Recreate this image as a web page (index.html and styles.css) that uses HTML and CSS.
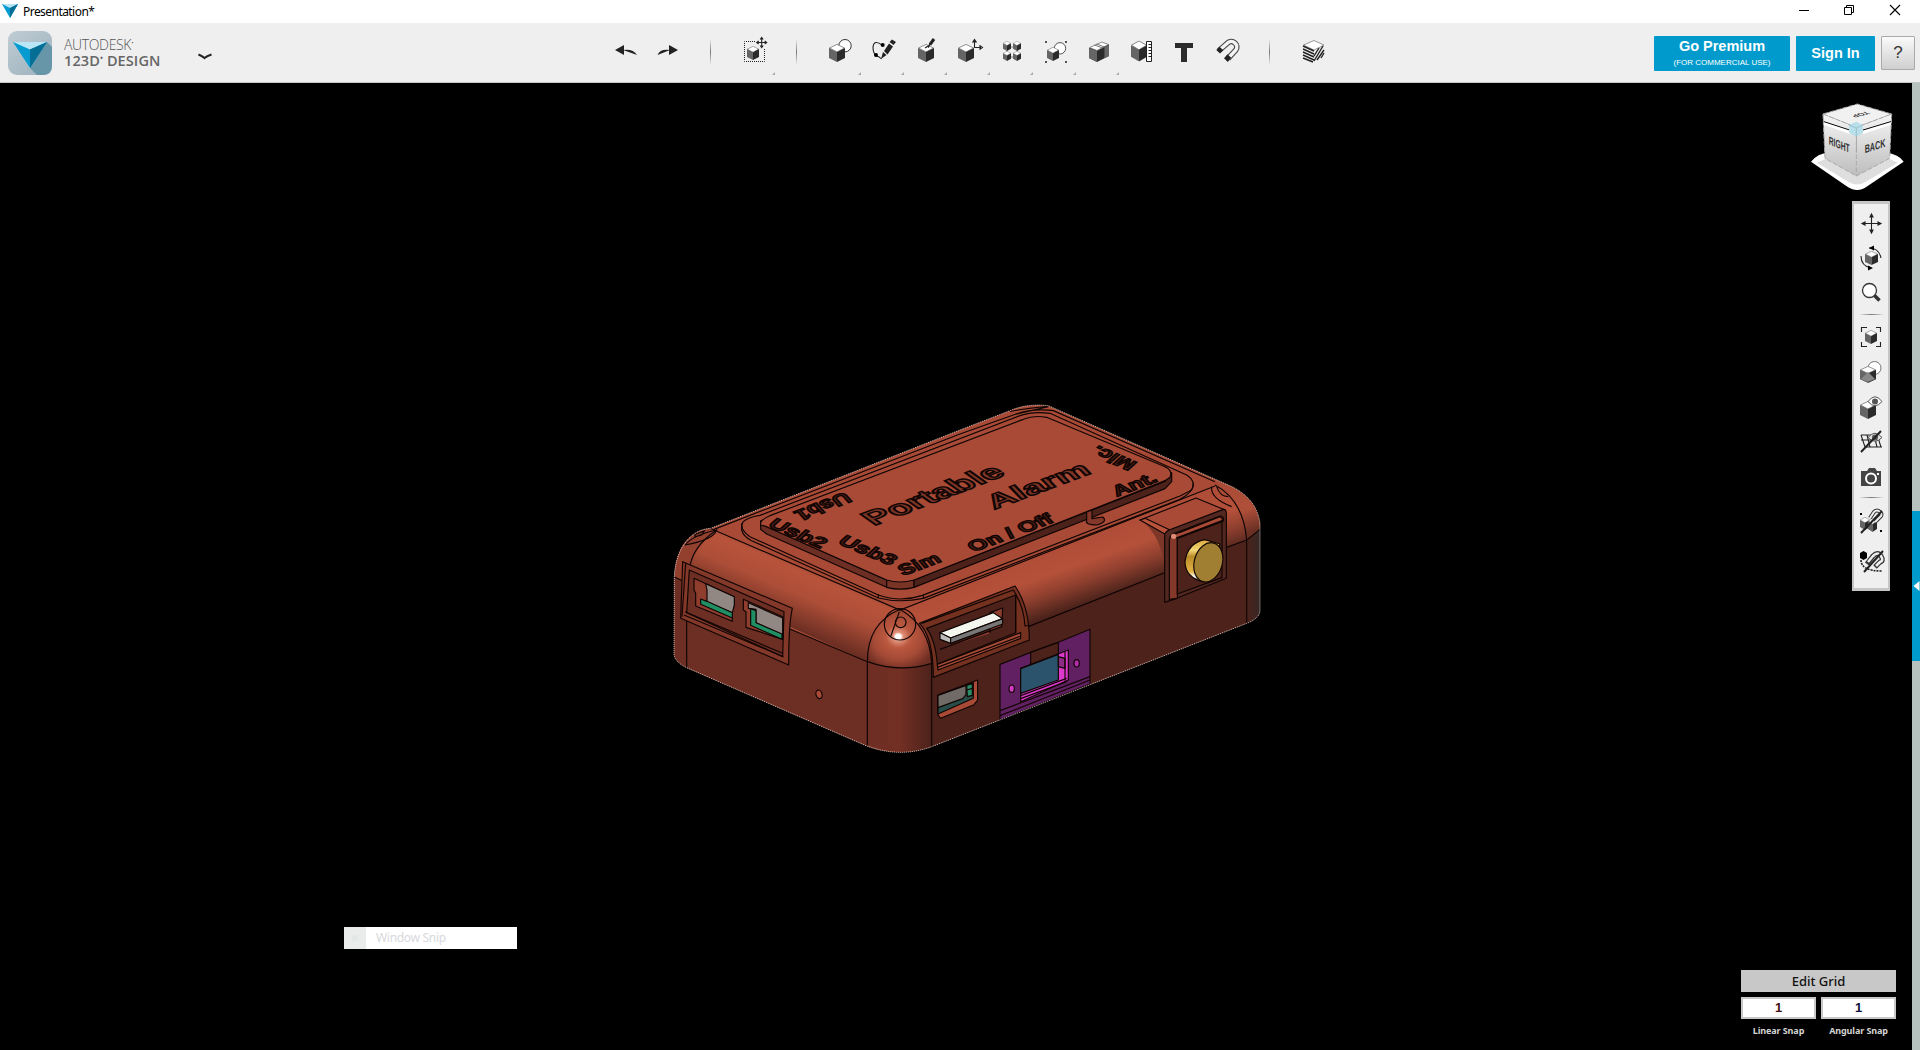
FILE: index.html
```html
<!DOCTYPE html>
<html lang="en">
<head>
<meta charset="utf-8">
<title>Presentation*</title>
<link rel="stylesheet" href="styles.css">
</head>
<body>
<svg class="defs" aria-hidden="true">
  <symbol id="cube" viewBox="0 0 16 18" preserveAspectRatio="none">
    <path d="M8 .4 15.5 4 8 8 .5 4Z" fill="#fff" stroke="#777" stroke-width=".8"/>
    <path d="M0 4 8 8V18L0 14Z" fill="#656565"/>
    <path d="M16 4 8 8V18L16 14Z" fill="#2b2b2b"/>
  </symbol>
  <symbol id="mark" viewBox="0 0 4 4"><path d="M4 0V4H0Z" fill="#aaa"/></symbol>
  <symbol id="gem" viewBox="0 0 34 28" preserveAspectRatio="none">
    <path d="M0 0H34L17 28Z" fill="#069bd0"/><path d="M0 0H34L17 8Z" fill="#b9e6f5"/><path d="M34 0 17 8V28Z" fill="#066d94"/>
  </symbol>
</svg>

<header class="titlebar">
  <svg class="titlebar-logo" width="16" height="14"><use href="#gem" width="16" height="14"/></svg>
  <span class="titlebar-text">Presentation*</span>
  <div class="window-buttons">
    <svg width="46" height="23"><path d="M15 10.500H25" stroke="#000"/></svg>
    <svg width="46" height="23"><path d="M14.500 7.500h7v7h-7zM16.500 7v-1.500h7v7h-2" fill="none" stroke="#000"/></svg>
    <svg width="46" height="23"><path d="M14 5l10 10M24 5L14 15" stroke="#000" stroke-width="1.100"/></svg>
  </div>
</header>

<div class="toolbar">
  <div class="brand">
    <svg width="44" height="44" viewBox="0 0 44 44">
      <defs><linearGradient id="bg" x2=".8" y2="1"><stop offset="0" stop-color="#c0ccd4"/><stop offset="1" stop-color="#9fb4bf"/></linearGradient></defs>
      <rect width="44" height="44" rx="9" fill="url(#bg)"/>
      <path d="M39 11 44 16V35Q44 44 35 44H29L22 37Z" fill="#6796a9"/>
      <use href="#gem" x="5" y="11" width="34" height="26"/>
    </svg>
    <div class="brand-name"><span class="brand-top">AUTODESK<sup>•</sup></span><span class="brand-bottom">123D<sup>•</sup> DESIGN</span></div>
    <svg class="chevron" width="16" height="8"><path d="M1.500 1.500Q5 3 7.500 5Q10 3 14.500 1.500" fill="none" stroke="#222" stroke-width="2.200"/></svg>
  </div>
  <nav class="tools">
    <svg class="tool"><path d="M12 27l9-5v10zM20 27Q30 25.500 34 32" class="arrow"/></svg>
    <svg class="tool"><path d="M32 27l-9-5v10zM24 27Q14 25.500 11.500 32" class="arrow"/></svg>
    <div class="divider"></div>
    <svg class="tool"><path d="M23 18.500H12.500V38.500H32.500V26" fill="none" stroke="#222" stroke-dasharray="1 1"/><use href="#cube" x="15" y="23" width="12" height="14"/><path d="M29.700 15v9M25.200 19.500h9M28.200 16.500l1.500-2 1.500 2M28.200 22.500l1.500 2 1.500-2M26.700 18l-2 1.500 2 1.500M32.700 18l2 1.500-2 1.500" class="line"/><use href="#mark" x="40" y="49" width="3" height="3"/></svg>
    <div class="divider"></div>
    <svg class="tool"><circle cx="27" cy="22.700" r="6.200" fill="#fff" stroke="#333"/><use href="#cube" x="11" y="21" width="16" height="18"/><use href="#mark" x="40" y="49" width="3" height="3"/></svg>
    <svg class="tool"><path d="M21 22Q13 16 12 24Q12 30 15 33Q18 33 20.500 36" class="line"/><circle cx="21.700" cy="22" r="2" /><circle cx="15" cy="32" r="2"/><path d="M20 36l2-7 3.500 3zM23 28l3.500 3.500 5.500-8-4-3zM28.500 19l4 3 2.500-3-4-2.500z" fill="#222"/><use href="#mark" x="40" y="49" width="3" height="3"/></svg>
    <svg class="tool"><use href="#cube" x="14" y="21" width="16" height="18"/><path d="M24 24.500l3-5" stroke="#222" stroke-width="1.500"/><path d="M26 21.500l4-5.500" stroke="#222" stroke-width="3"/><path d="M21 25l3-2" class="line"/><use href="#mark" x="40" y="49" width="3" height="3"/></svg>
    <svg class="tool"><use href="#cube" x="11" y="21" width="16" height="18"/><path d="M27.500 25V17M27 24.500h7M25.800 19l1.700-2.500 1.700 2.500zM33 22.800l2.500 1.700-2.500 1.700z" class="line"/><use href="#mark" x="40" y="49" width="3" height="3"/></svg>
    <svg class="tool"><path d="M17 25v6M27 25v6M20 24h6M20 34h6" stroke="#888"/><use href="#cube" x="13" y="18" width="8" height="10"/><use href="#cube" x="23" y="18" width="8" height="10"/><use href="#cube" x="13" y="28" width="8" height="10"/><use href="#cube" x="23" y="28" width="8" height="10"/><use href="#mark" x="40" y="49" width="3" height="3"/></svg>
    <svg class="tool"><circle cx="27" cy="25.300" r="5.700" fill="#fff" stroke="#555"/><use href="#cube" x="14" y="24" width="12" height="14"/><path d="M12 18h2v2h-2zM32 18h2v2h-2zM12 38h2v2h-2zM32 38h2v2h-2z" fill="#555"/><use href="#mark" x="40" y="49" width="3" height="3"/></svg>
    <svg class="tool"><path d="M13 25L26 19l7 2.500V33l-12 6-8-4z" fill="#2b2b2b"/><path d="M13 25l8 3v11l-8-4z" fill="#666"/><path d="M13.500 24.500L26 19l6.500 2.500L21 27.500z" fill="#fff" stroke="#777" stroke-width=".7"/><path d="M18.500 22l8 3M20.500 21l8 3v11" fill="none" stroke="#555" stroke-width=".8"/><path d="M29 24l4-2v11l-4 2z" fill="#666"/><use href="#mark" x="40" y="49" width="3" height="3"/></svg>
    <svg class="tool"><use href="#cube" x="12" y="17.500" width="16" height="21"/><path d="M27.500 18.500h5v20h-5zM29.500 21.500h3M29.500 24.500h3M29.500 27.500h3M29.500 30.500h3M29.500 33.500h3" fill="#fff" stroke="#222"/></svg>
    <svg class="tool"><path d="M13 20h18v5h-6v14h-6V25h-6z" fill="#2b2b2b"/></svg>
    <svg class="tool"><path d="M14 27.500L22 20.500C27 15 35 22 30.500 27.500L23 35.500" fill="none" stroke="#444" stroke-width="5.600"/><path d="M14 27.500L22 20.500C27 15 35 22 30.500 27.500L23 35.500" fill="none" stroke="#f4f4f4" stroke-width="3.400"/><path d="M11.300 27l3.200-3.300 3.800 3.600-3.300 3.300zM19 35.300l3.500-4 3.700 3.400-3.400 4.200z" fill="#222"/></svg>
    <div class="divider"></div>
    <svg class="tool"><path d="M12.500 22.500l10.500 5 10-5V33l-10 6-10.500-5z" fill="#eee"/><path d="M12.500 22L23 17.500 33 22l-10 5z" fill="#fff" stroke="#555" stroke-width=".6"/><path d="M12 23l11 5M12 26l11 5M12 29l11 5M12 32l11 5M12 35l10 4M23 33l5-8M23 38l9-15M26 37l7-10M30 35l3-5" stroke="#222" stroke-width="1.400"/></svg>
  </nav>
  <div class="account">
    <button class="btn premium"><b>Go Premium</b><small>(FOR COMMERCIAL USE)</small></button>
    <button class="btn sign"><b>Sign In</b></button>
    <button class="btn help">?</button>
  </div>
</div>

<main class="workspace">
  <svg class="model" viewBox="0 0 1860 1110">
    <defs>
      <linearGradient id="gl" gradientUnits="userSpaceOnUse" x1="460" y1="530" x2="385" y2="705"><stop offset="0" stop-color="#a24733"/><stop offset=".15" stop-color="#b8533b"/><stop offset=".5" stop-color="#ad4e38"/><stop offset="1" stop-color="#6d2f23"/></linearGradient>
      <linearGradient id="gr" gradientUnits="userSpaceOnUse" x1="1230" y1="465" x2="1290" y2="635"><stop offset="0" stop-color="#b04d38"/><stop offset=".35" stop-color="#b5513a"/><stop offset=".65" stop-color="#8e3f2e"/><stop offset="1" stop-color="#4c231b"/></linearGradient>
      <linearGradient id="gc"><stop offset="0" stop-color="#6d2e23"/><stop offset=".5" stop-color="#732f24"/><stop offset="1" stop-color="#4c221b"/></linearGradient>
      <linearGradient id="ge"><stop offset="0" stop-color="#4c221b"/><stop offset="1" stop-color="#352724"/></linearGradient>
      <linearGradient id="gt" x2=".3" y2="1"><stop offset="0" stop-color="#a84a36"/><stop offset=".6" stop-color="#b0503a"/><stop offset="1" stop-color="#6a3024"/></linearGradient>
      <radialGradient id="gs" cx=".48" cy=".46" r=".6"><stop offset="0" stop-color="#fff"/><stop offset=".07" stop-color="#fff"/><stop offset=".13" stop-color="#e0917a"/><stop offset=".32" stop-color="#bb5840"/><stop offset=".65" stop-color="#a54a36"/><stop offset="1" stop-color="#6d2e23"/></radialGradient>
      <linearGradient id="gold" x2="0" y2="1"><stop offset="0" stop-color="#d9a93c"/><stop offset=".25" stop-color="#f4d775"/><stop offset=".4" stop-color="#b98a28"/><stop offset=".75" stop-color="#e3b345"/><stop offset=".88" stop-color="#fff"/><stop offset="1" stop-color="#d5a73f"/></linearGradient>
    </defs>
    <!-- enclosure body -->
    <path d="M43 560C46 480 90 418 152 415L900 120 1050 62Q1100 40 1165 47L1700 283Q1790 320 1800 400V660Q1800 685 1760 700L815 1070Q720 1105 620 1068L80 833Q42 815 42 790Z" fill="#a84a36"/>
    <path d="M43 560L80 578 388 716 622 815V1068L80 833Q42 815 42 790Z" fill="#6d2e23"/>
    <path d="M815 818L1100 706 1520 545 1760 448V700L815 1070Z" fill="#4c221b"/>
    <path d="M1760 448L1800 416V660Q1800 685 1760 700Z" fill="url(#ge)"/>
    <path d="M622 815Q720 850 815 820V1070Q720 1105 622 1066Z" fill="url(#gc)"/>
    <path d="M170 420L720 660Q622 700 622 815L80 570Q90 480 170 420Z" fill="url(#gl)"/>
    <path d="M720 655L1665 285Q1750 330 1760 450L815 820Q810 710 720 655Z" fill="url(#gr)"/>
    <path d="M152 415Q48 430 43 560L80 578Q90 480 170 420Z" fill="#93402f"/>
    <path d="M1665 285Q1750 330 1760 450L1800 418Q1795 330 1700 283Z" fill="url(#gt)"/>
    <path d="M720 660Q622 700 622 815Q720 850 815 820Q810 710 720 660Z" fill="url(#gs)"/>
    <g class="edge">
      <path d="M150 415L720 660 1665 288M162 418L900 132 1060 75Q1115 54 1180 62L1665 275M42 560L80 578M388 716L622 815Q720 850 815 820M1105 710L1514 548M1700 472L1760 450 1800 418M720 658Q622 700 622 815V1067M720 658Q810 710 815 820V1070M80 680V833M88 540Q95 470 170 420M1665 285Q1750 330 1760 450V700M1050 64Q1100 55 1165 49M1062 74L1165 50"/>
      <path d="M75 465Q100 435 170 420Q160 450 75 465M105 433l28-10-8 12-20 5zM1655 290Q1650 325 1715 350M1670 290q10 30 35 30"/>
      <circle cx="720" cy="703" r="47"/><circle cx="722" cy="697" r="16"/><path d="M718 665L692 740"/>
    </g>
    <!-- raised lid -->
    <path class="face" d="M270 440Q235 415 250 395Q262 382 300 376L1080 77Q1120 63 1170 70L1580 255Q1610 275 1595 300L1560 318 785 617Q720 638 655 615Z" fill="#a84a36"/>
    <path class="edge" d="M245 400V420Q250 440 275 452L655 624Q720 640 790 625L1560 328Q1600 308 1600 280M655 612v12M790 616v10"/>
    <path class="face" d="M302 392V418L320 432 680 592V570L320 410Z" fill="#6d2e23"/>
    <path class="face" d="M680 570V592Q720 603 762 592V570Z" fill="#7a3426"/>
    <path class="face" d="M762 570V592L1515 296 1535 275V248L1515 274Z" fill="#4c221b"/>
    <path class="face" d="M302 405Q298 390 330 377L1090 88Q1120 75 1160 82L1510 228Q1540 240 1530 262L1515 272 762 570Q720 582 680 570L320 410Z" fill="#a84a36"/>
    <path class="face" d="M1280 366v25q-6 14 30 14 35-10 18-24l-32 5v-26z" fill="#843829"/>
    <g class="engraved">
      <text class="large" transform="matrix(1 -.385 .68 .48 641 408)">Portable</text>
      <text class="large" transform="matrix(1.04 -.39 .5 .52 1003 359)">Alarm</text>
      <text transform="matrix(.67 -.25 .36 .38 940 487)">On / Off</text>
      <text transform="matrix(.64 -.24 .33 .4 730 558)">Sim</text>
      <text transform="matrix(.65 -.24 .3 .4 1370 320)">Ant.</text>
      <text transform="matrix(.66 .28 -.4 .36 320 408)">Usb2</text>
      <text transform="matrix(.66 .28 -.4 .36 530 459)">Usb3</text>
      <text transform="matrix(-.64 .25 -.36 -.4 554 305)">Usb1</text>
      <text transform="matrix(-.62 -.27 .4 -.36 1434 218)">Mic.</text>
    </g>
    <!-- USB port recess -->
    <g class="face">
      <path d="M68 515L397 655Q386 700 386 825L62 685Z" fill="#843829"/>
      <path d="M88 540L372 665 368 800 80 668Z" fill="#6d2e23"/>
      <path d="M75 665L368 790M72 675L370 800M77 520L66 680" fill="none"/>
      <path d="M102 565L223 620V645L217 660V694L107 648V610L102 600Z" fill="#8f3e2e"/><path d="M137 581L223 620V645L217 668 141 636 141 600Z" fill="#918883"/><path d="M122 627L141 634 217 668V684L122 643Z" fill="#209064"/>
      <path d="M250 628L368 680V748L258 712V665L250 660Z" fill="#8f3e2e"/><path d="M265 638L368 684V735L288 698V658L265 655Z" fill="#918883"/><path d="M272 656L288 662V698L366 732V748L272 706Z" fill="#209064"/>
    </g>
    <ellipse cx="477" cy="913" rx="9" ry="13" transform="rotate(-15 477 913)" fill="#a84a36" class="edge-line"/>
    <!-- SIM slot recess -->
    <g class="face">
      <path d="M778 700L1065 588Q1108 650 1108 750L820 862Q820 740 778 700Z" fill="#74311f"/>
      <path d="M800 715L1067 615V728L832 823Q826 750 800 715Z" fill="#4c221b"/>
      <path d="M785 700L1060 600Q1092 650 1095 708L1108 706M1067 615V728" fill="none"/>
      <path d="M832 823L1082 728V745L834 840Z" fill="#a64a36"/><path d="M832 832L1082 738" fill="none"/>
      <path d="M840 778L1025 710 1028 654 990 668V730" fill="#8f3e2e"/>
      <path d="M840 728L1000 668 1028 686 872 744Z" fill="#f5f7ee"/><path d="M840 728L872 744V760L840 748Z" fill="#bbb"/><path d="M872 744L1028 686V702L872 760Z" fill="#777"/>
    </g>
    <!-- micro USB -->
    <g class="face"><path d="M834 915L953 870V930L942 944 842 985 834 975Z" fill="#a84a36"/><path d="M834 916L940 878V925L834 972Z" fill="#294d48"/><path d="M834 916L918 886V914L908 926 834 953Z" fill="#706b67"/><path d="M920 886L937 880V916L922 920ZM920 900l17-5" fill="#2b8c68"/></g>
    <!-- slide switch -->
    <g class="face"><path d="M1020 823L1112 787 1195 757 1290 718V882L1020 990Z" fill="#612061"/><path d="M1112 787L1195 757V793L1112 825Z" fill="#4c221b"/><path d="M1082 835L1225 780V870L1082 935Z" fill="#dc39cb"/><path d="M1082 836L1195 793V870L1082 910Z" fill="#2b536c"/><path d="M1195 800l20 5v30l-20-5z" fill="#8b2c83"/><path d="M1215 785V872M1082 917L1220 865M1082 926L1220 875M1020 962L1290 860M1020 977L1290 870" fill="none"/><ellipse cx="1055" cy="896" rx="8" ry="11" fill="#d33ac5"/><ellipse cx="1250" cy="820" rx="8" ry="11" fill="#b52cae"/></g>
    <!-- antenna connector -->
    <path d="M1440 388Q1510 440 1514 550V430Z" fill="#7d3729"/>
    <g class="face">
      <path d="M1440 390L1608 324 1696 360 1530 420Z" fill="#a84a36"/><path d="M1440 390L1520 435 1530 420 1455 385Z" fill="#b9533b"/>
      <path d="M1514 637V435Q1516 422 1535 417L1690 358Q1699 358 1699 370V565L1550 625Z" fill="#522820"/>
      <path d="M1528 628V450Q1530 432 1550 428L1680 378Q1692 378 1691 392L1552 445V625Z" fill="#843829"/>
      <path d="M1552 445L1686 395V563L1552 612Z" fill="#4c221b"/><path d="M1540 440Q1545 430 1560 427L1680 380 1690 390 1552 443Z" fill="#a84a36"/>
    </g>
    <circle cx="1541" cy="439" r="8" fill="#df8b75"/>
    <path class="face" d="M1634 449Q1582 460 1575 515 1575 562 1632 576L1680 462Z" fill="url(#gold)"/>
    <ellipse class="face" cx="1645" cy="517" rx="42" ry="60" transform="rotate(16 1645 517)" fill="#a17f32"/>
    <path class="outline" d="M43 560C46 480 90 418 152 415L900 120 1050 62Q1100 40 1165 47L1700 283Q1790 320 1800 400V660Q1800 685 1760 700L815 1070Q720 1105 620 1068L80 833Q42 815 42 790Z"/>
  </svg>

  <svg class="viewcube" viewBox="0 0 390 270">
    <defs><linearGradient id="vl" x2="0" y2="1"><stop offset="0" stop-color="#f5f5f5"/><stop offset="1" stop-color="#bdbdbd"/></linearGradient></defs>
    <path d="M66 215Q85 190 120 188H290Q330 192 344 215L236 288Q205 312 172 288Z" fill="#fff"/>
    <path d="M84 218L120 202H290L326 218 228 277Q205 290 180 277Z" fill="#dedede"/>
    <path d="M102 72L202 112V258L108 205Z" fill="url(#vl)"/><path d="M308 72L202 112V258L302 205Z" fill="url(#vl)"/>
    <path d="M102 72L205 42 308 72 202 112Z" fill="#f1f1f1"/>
    <path d="M102 92L182 118V132L105 104ZM308 92L222 118V132L306 104Z" fill="#fff"/>
    <path d="M102 94L182 120M308 94L222 120" stroke="#000" stroke-width="3" fill="none"/>
    <path d="M102 72L205 42 308 72 202 112ZM102 72L108 205 202 258 302 205 308 72M202 112V258" fill="none" stroke="#aaa" stroke-width="3" stroke-dasharray="15 5"/>
    <path d="M180 105L202 95 222 105V128L202 140 180 128Z" fill="#b9dfeb"/><path d="M180 105l22 9 20-9M202 114v26" fill="none" stroke="#89b2c0" stroke-width="2"/>
    <text transform="matrix(.7 .28 0 1.2 119 163)">RIGHT</text><text transform="matrix(.74 -.24 0 1.2 227 190)">BACK</text><text transform="matrix(-.8 .2 -.65 -.35 232 64)">TOP</text>
  </svg>

  <div class="navbar">
    <svg class="nav"><path d="M17.500 8.500v18M8 17.500h19M16 11l1.500-3 1.500 3zM16 24l1.500 3 1.500-3zM11 16l-3 1.500 3 1.500zM24 16l3 1.500-3 1.500z" class="line"/></svg>
    <svg class="nav"><use href="#cube" x="11" y="10" width="13" height="14"/><path d="M15 7Q25 7 27 17M7 15Q7 25 17 27" class="line"/><path d="M20 4.500l-5 2.500 5 2.500zM14 24.500l5 2.500-5 2.500z"/></svg>
    <svg class="nav"><circle cx="15.500" cy="14.500" r="7" fill="#fff" stroke="#333" stroke-width="1.300"/><path d="M20.500 19.500l5 5" stroke="#333" stroke-width="3.500"/></svg>
    <div class="nav-divider"></div>
    <svg class="nav"><path d="M7.500 13V8.500H13M22 8.500h4.500V13M7.500 23v4.500H13M22 27.500h4.500V23" class="line"/><use href="#cube" x="11" y="11" width="12" height="14"/></svg>
    <svg class="nav"><circle cx="20.500" cy="14" r="6.500" fill="#fff" stroke="#777"/><use href="#cube" x="6" y="12" width="16" height="17"/><path d="M14 18v10l-7-3z" fill="#555"/><path d="M14 18l7 7-7 3-7-3z" fill="#888"/></svg>
    <svg class="nav"><use href="#cube" x="6" y="12" width="16" height="18"/><path d="M14 12.500Q21 3 28 12.500Q21 21 14 12.500Z" fill="#fff" stroke="#555"/><circle cx="21" cy="12.500" r="3" fill="#555"/></svg>
    <svg class="nav"><path d="M7 11h17M9 16h17M11 23h17M7 11l4 12M13 11l3 12M20 11l3 12M25 17l2 6M7 16h4" class="line"/><path d="M14 13.500Q21 5 28 13.500Q21 21 14 13.500Z" fill="#ddd" stroke="#555"/><circle cx="21" cy="13.500" r="3" fill="#555"/><path class="slash" d="M7 28L27 7"/></svg>
    <svg class="nav"><path d="M7 12h6l2-3h6l2 3h4v15H7z" fill="#444"/><circle cx="17" cy="19.500" r="5" fill="#444" stroke="#fff" stroke-width="2"/><path d="M23 14h2v2h-2z" fill="#fff"/></svg>
    <div class="nav-divider"></div>
    <svg class="nav tall"><use href="#cube" x="6" y="15" width="10" height="13"/><use href="#cube" x="14" y="16" width="9" height="14"/><path d="M16 16l4-6q3-3 6 0t0 5l-5 5" fill="none" stroke="#333" stroke-width="4"/><path d="M16 16l4-6q3-3 6 0t0 5l-5 5" fill="none" stroke="#eee" stroke-width="2"/><path d="M6 11h2v2H6zM26 28h2v2h-2z"/><path class="slash" d="M7 31L28 9"/></svg>
    <svg class="nav tall"><path d="M6 13l3.500-2 3.500 2v5l-3.500 2-3.500-2z"/><path d="M7 20Q7 31 28 31" fill="none" stroke="#222" stroke-width="1.600" stroke-dasharray="2 1"/><path d="M13 24l6-8q5-5 8 0t-1 6l-5 5" fill="none" stroke="#333" stroke-width="5"/><path d="M14 22l5-6q5-5 8 0t-1 6l-4 4" fill="none" stroke="#eee" stroke-width="2.500"/><path class="slash" d="M10 32L29 11"/></svg>
  </div>

  <div class="snip"><span class="snip-icon"><i></i></span><span class="snip-text">Window Snip</span></div>

  <div class="grid-panel">
    <div class="edit-grid">Edit Grid</div>
    <div class="value linear">1</div><div class="value angular">1</div>
    <div class="caption">Linear Snap</div><div class="caption">Angular Snap</div>
  </div>
  <aside class="side-strip"><div class="side-handle"><svg width="8" height="12"><path d="M7.500 1v10L1.500 6z" fill="#fff"/></svg></div></aside>
</main>
</body>
</html>
```
FILE: styles.css
```css
* { box-sizing: border-box; }
body { margin: 0; width: 1920px; height: 1050px; overflow: hidden; display: flex; flex-direction: column; background: #000; font-family: "Liberation Sans", Arial, sans-serif; }
svg { display: block; flex: none; }
.defs { position: absolute; width: 0; height: 0; }

.titlebar { height: 23px; display: flex; align-items: center; background: #fff; padding-left: 2px; flex: none; }
.titlebar-logo { margin-bottom: 1px; }
.titlebar-text { margin: 1px 0 0 5px; font: 12px/20px "Noto Sans", sans-serif; letter-spacing: -.55px; color: #000; }
.window-buttons { display: flex; margin-left: auto; margin-right: -2px; }

.toolbar { height: 60px; display: flex; background: #efefef; border-bottom: 1px solid #c5c7c7; flex: none; }
.brand { width: 603px; display: flex; align-items: flex-start; padding: 8px 0 0 8px; }
.brand-name { width: 133px; display: flex; flex-direction: column; margin: 5px 0 0 12px; font-family: "Open Sans", sans-serif; color: #555; white-space: nowrap; }
.brand-top { font-size: 14px; line-height: 18px; letter-spacing: -.35px; font-weight: 300; }
.brand-bottom { font-size: 14.5px; line-height: 14px; font-weight: 600; letter-spacing: .1px; color: #666; }
.brand-name sup { font-size: 8px; line-height: 0; vertical-align: 5px; }
.chevron { margin-top: 22px; }
.tools { display: flex; flex: 1; }
.tool { width: 43px; height: 59px; }
.arrow { fill: #222; stroke: none; }
.line { fill: none; stroke: #222; stroke-width: 1.1; }
.divider { width: 43px; height: 59px; background: linear-gradient(transparent, #777, transparent) 21px 16px / 1px 26px no-repeat; }
.account { display: flex; gap: 6px; padding: 13px 5px 0 0; }
.btn { height: 35px; border: 0; border-radius: 1px; padding: 0; background: #009bcc; color: #fff; font-family: inherit; font-size: 15px; }
.premium { width: 136px; display: flex; flex-direction: column; align-items: center; justify-content: flex-start; }
.premium b { line-height: 17px; padding-top: 2px; font-size: 14.5px; }
.premium small { font-size: 8px; line-height: 10px; padding-top: 3px; }
.sign { width: 79px; font-size: 14.5px; padding-bottom: 2px; }
.help { width: 34px; height: 34px; border: 1px solid #aaa; background: linear-gradient(#fafafa, #cfcfcf); color: #333; font-size: 17px; }

.workspace { position: relative; flex: 1; background: #000; display: flex; justify-content: flex-end; }
.model { position: absolute; left: 660px; top: 307px; width: 620px; height: 370px; }
.edge, .edge-line { stroke: #100503; stroke-width: 3.5; }
.edge { fill: none; }
.face { stroke: #100503; stroke-width: 3.5; stroke-linejoin: round; }
.outline { fill: none; stroke: #e6dedb; stroke-width: 2.5; stroke-dasharray: 3 3; }
.engraved { font: bold 100px "Liberation Sans", Arial, sans-serif; fill: #4a1d15; stroke: #100503; stroke-width: 8; }
.engraved .large { fill: #7d3527; stroke-width: 6.5; }

.viewcube { position: absolute; left: 1789px; top: 7px; width: 130px; height: 90px; overflow: visible; }
.viewcube text { font: bold 29px "Liberation Sans", Arial, sans-serif; fill: #333; }

.navbar { width: 38px; height: 390px; margin: 118px 22px 0 0; padding-top: 2px; background: #efefef; border: solid #c4c5c5; border-width: 3px 2px; display: flex; flex-direction: column; }
.nav { width: 34px; height: 35px; }
.nav.tall { height: 38px; }
.nav-divider { height: 8px; background: linear-gradient(90deg, transparent, #777, transparent) 5px 3px / 25px 1px no-repeat; flex: none; }
.slash { stroke: #222; stroke-width: 2; }

.side-strip { width: 8px; background: #b7c1be; padding-top: 428px; }
.side-handle { height: 150px; background: #009bcc; display: flex; align-items: center; }

.snip { position: absolute; left: 344px; top: 844px; width: 173px; height: 22px; background: #fff; display: flex; }
.snip-icon { width: 22px; background: #eaebeb; display: flex; align-items: center; justify-content: center; }
.snip-icon i { width: 6px; height: 6px; background: #e3e8e7; }
.snip-text { padding-left: 10px; font: 12px/21px "Noto Sans", sans-serif; letter-spacing: -.3px; color: #d8d9dd; }

.grid-panel { position: absolute; left: 1741px; top: 887px; width: 155px; display: grid; grid-template-columns: 75px 75px; column-gap: 5px; }
.edit-grid { grid-column: 1 / 3; height: 22px; margin-bottom: 5px; background: #c8c8c8; font: 500 13px/22px "Noto Sans", sans-serif; text-align: center; color: #111; }
.value { height: 22px; border: 2px solid #c8c8c8; background: #fff; font: bold 13px/18px "Liberation Sans", sans-serif; text-align: center; }
.linear { color: #451010; }
.angular { color: #101040; }
.caption { padding-top: 6px; font: bold 9px/12px "Noto Sans", sans-serif; letter-spacing: -.1px; text-align: center; color: #d4d4d4; white-space: nowrap; }
```
